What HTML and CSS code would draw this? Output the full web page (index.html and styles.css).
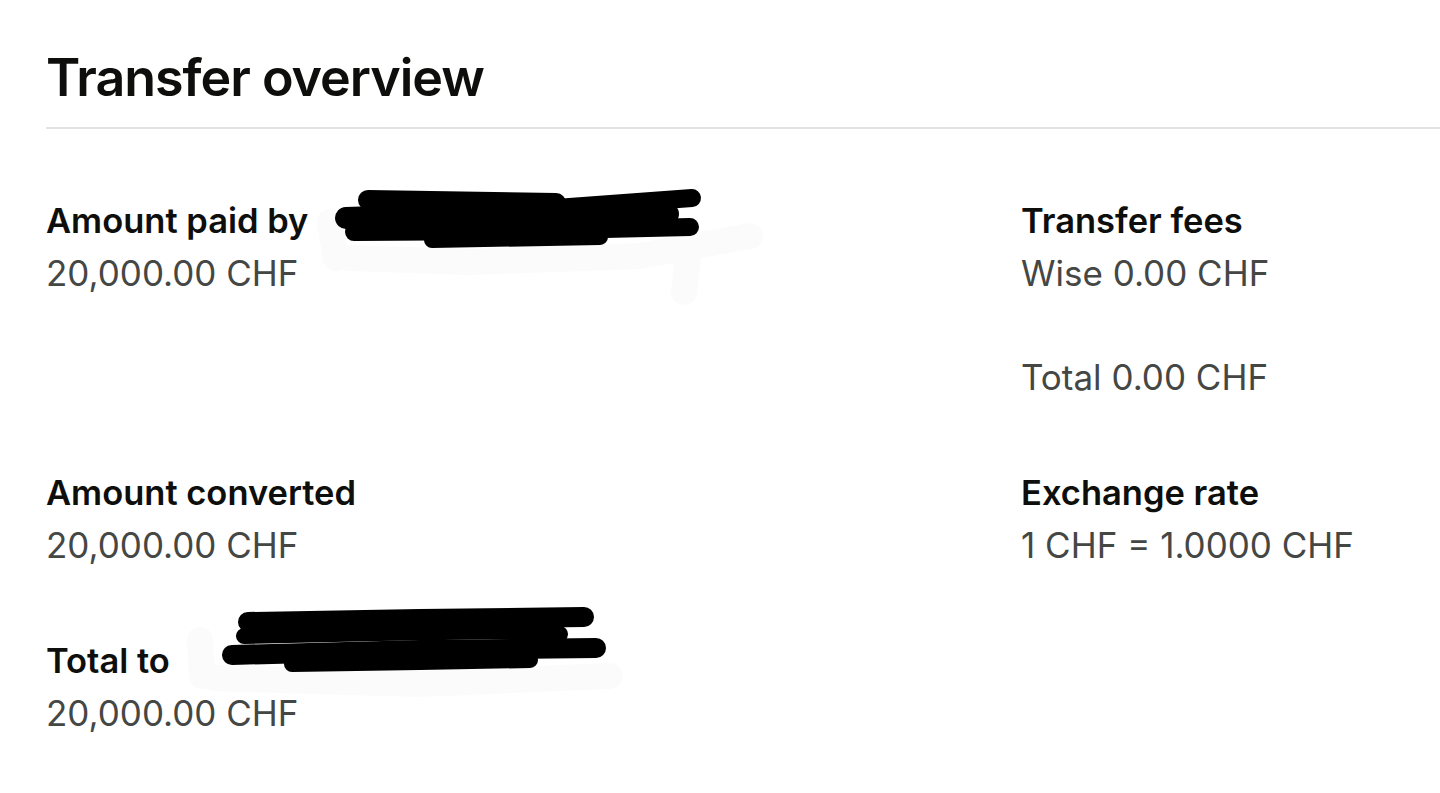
FILE: index.html
```html
<!DOCTYPE html>
<html lang="en">
<head>
<meta charset="utf-8">
<title>Transfer overview</title>
<link rel="stylesheet" href="styles.css">
</head>
<body>
<main class="page">
  <header class="header">
    <h1 class="title">Transfer overview</h1>
  </header>
  <section class="grid">
    <div class="item">
      <div class="label">Amount paid by</div>
      <div class="value">20,000.00 CHF</div>
    </div>
    <div class="item">
      <div class="label">Transfer fees</div>
      <div class="value">Wise 0.00 CHF</div>
      <div class="value spacer">&nbsp;</div>
      <div class="value">Total 0.00 CHF</div>
    </div>
    <div class="item">
      <div class="label">Amount converted</div>
      <div class="value">20,000.00 CHF</div>
    </div>
    <div class="item">
      <div class="label">Exchange rate</div>
      <div class="value">1 CHF = 1.0000 CHF</div>
    </div>
    <div class="item">
      <div class="label">Total to</div>
      <div class="value">20,000.00 CHF</div>
    </div>
  </section>
  <svg class="redactions" width="1440" height="793" viewBox="0 0 1440 793" aria-hidden="true">
    <g fill="none" stroke="#fbfbfb" stroke-linecap="round" stroke-linejoin="round" stroke-width="26">
      <path d="M330 222 L336 258"/>
      <path d="M350 258 L470 262 L640 256 L750 236"/>
      <path d="M690 240 L684 292"/>
      <path d="M200 640 L202 676"/>
      <path d="M215 678 L420 684 L610 676"/>
    </g>
    <g fill="none" stroke="#000" stroke-linecap="round" stroke-linejoin="round">
      <path stroke-width="20" d="M368 200 L556 203"/>
      <path stroke-width="18" d="M556 208 L692 198"/>
      <path stroke-width="22" d="M346 218 L470 214 L668 214"/>
      <path stroke-width="18" d="M354 232 L520 231 L690 227"/>
      <path stroke-width="16" d="M432 240 L600 237"/>
      <path stroke-width="20" d="M248 622 L420 619 L584 617"/>
      <path stroke-width="16" d="M244 636 L380 633 L505 631 L560 634"/>
      <path stroke-width="20" d="M232 655 L420 650 L596 648"/>
      <path stroke-width="16" d="M292 664 L420 662 L530 660"/>
    </g>
  </svg>
</main>
</body>
</html>
```

FILE: styles.css
```css
* { box-sizing: border-box; }

html, body {
  margin: 0;
  padding: 0;
  background: #ffffff;
}

body {
  font-family: Inter, "Noto Sans", "Liberation Sans", sans-serif;
  color: #0e0f0c;
  overflow: hidden;
}

.page {
  position: relative;
  width: 1440px;
  height: 793px;
  padding-left: 46px;
}

.header {
  padding-top: 47px;
  padding-bottom: 18px;
  border-bottom: 2px solid #e2e2e2;
}

.title {
  margin: 0;
  font-size: 52px;
  line-height: 62px;
  font-weight: 600;
  letter-spacing: -0.02em;
  color: #0e0f0c;
}

.grid {
  display: grid;
  grid-template-columns: 975px 1fr;
  row-gap: 64px;
  padding-top: 66px;
}

.label {
  font-size: 34.5px;
  line-height: 52px;
  font-weight: 600;
  color: #0e0f0c;
}

.value {
  font-size: 35px;
  line-height: 52px;
  font-weight: 400;
  color: #454745;
}

.redactions {
  position: absolute;
  left: 0;
  top: 0;
  pointer-events: none;
}
```
